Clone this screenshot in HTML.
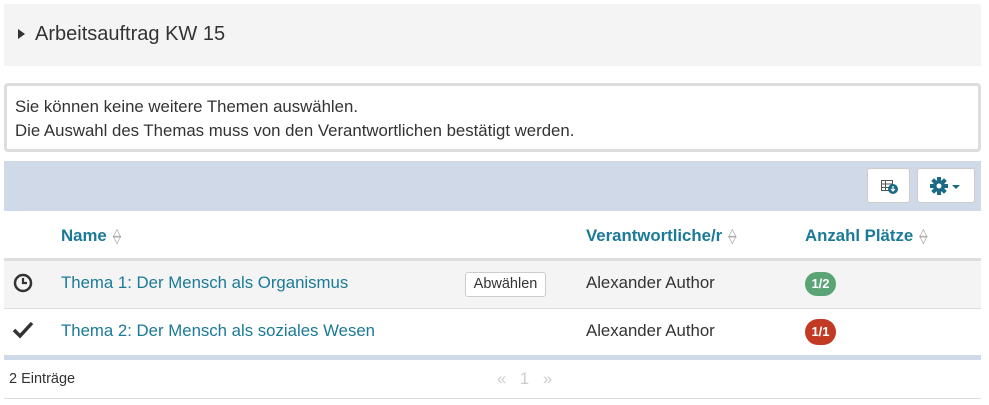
<!DOCTYPE html><html><head><meta charset="utf-8"><style>
body{margin:0;background:#fff;font-family:"Liberation Sans",sans-serif;color:#333;width:989px;height:405px;overflow:hidden;position:relative}
.a{position:absolute}
.link{color:#1a7a98}
.th{color:#1a7a98;font-weight:bold;font-size:16.8px}
.sort{color:#999;font-size:11px;display:inline-block;line-height:7px;vertical-align:middle;margin-left:6px;font-weight:normal}
</style></head><body>
<div class="a" style="left:4px;top:4px;width:977px;height:62px;background:#f4f4f4"></div>
<div class="a" style="left:18px;top:29px;width:0;height:0;border-left:7px solid #333;border-top:5px solid transparent;border-bottom:5px solid transparent"></div>
<div class="a" style="left:35px;top:23px;font-size:20px;color:#333">Arbeitsauftrag KW 15</div>
<div class="a" style="left:4px;top:83px;width:963px;height:63px;border:3px solid #ddd;border-radius:4px;font-size:16.8px;line-height:24px;padding:0 0 0 8px;box-sizing:content-box"><div style="margin-top:9px">Sie können keine weitere Themen auswählen.<br>Die Auswahl des Themas muss von den Verantwortlichen bestätigt werden.</div></div>
<div class="a" style="left:4px;top:161px;width:977px;height:50px;background:#cfd9e8"></div>
<div class="a" style="left:867px;top:168px;width:43px;height:35px;background:#fff;border:1px solid #ccc;border-radius:3px;box-sizing:border-box"><svg width="43" height="35"><g fill="none" stroke="#555" stroke-width="1"><rect x="13.5" y="11.5" width="11" height="10"/><line x1="13.5" y1="15" x2="24.5" y2="15"/><line x1="13.5" y1="18.5" x2="24.5" y2="18.5"/><line x1="17.5" y1="11.5" x2="17.5" y2="21.5"/></g><circle cx="25" cy="20" r="5" fill="#1a6a86"/><path d="M25 17v5M23 20l2 2 2-2" stroke="#fff" stroke-width="1.2" fill="none"/></svg></div>
<div class="a" style="left:917px;top:168px;width:58px;height:35px;background:#fff;border:1px solid #ccc;border-radius:3px;box-sizing:border-box"><svg width="58" height="35"><g transform="translate(21,17)" fill="#1a6a86"><circle r="6"/><g><rect x="-2" y="-9" width="4" height="18"/><rect x="-9" y="-2" width="18" height="4"/><rect x="-2" y="-9" width="4" height="18" transform="rotate(45)"/><rect x="-2" y="-9" width="4" height="18" transform="rotate(-45)"/></g><circle r="2.5" fill="#fff"/></g><path d="M34 16h8l-4 4z" fill="#1a6a86"/></svg></div>
<div class="a th" style="left:61px;top:226px">Name<span class="sort">△<br>▽</span></div>
<div class="a th" style="left:586px;top:226px">Verantwortliche/r<span class="sort">△<br>▽</span></div>
<div class="a th" style="left:805px;top:226px">Anzahl Plätze<span class="sort">△<br>▽</span></div>
<div class="a" style="left:4px;top:258px;width:977px;height:3px;background:#ddd"></div>
<div class="a" style="left:4px;top:261px;width:977px;height:47px;background:#f4f4f4"></div>
<div class="a" style="left:4px;top:308px;width:977px;height:1px;background:#ddd"></div>
<svg class="a" style="left:12px;top:272px" width="22" height="22"><circle cx="11" cy="11" r="8" fill="none" stroke="#333" stroke-width="2.5"/><path d="M11 6v5h4" stroke="#333" stroke-width="2.2" fill="none"/></svg>
<div class="a link" style="left:61px;top:273px;font-size:16.8px">Thema 1: Der Mensch als Organismus</div>
<div class="a" style="left:465px;top:272px;width:81px;height:25px;border:1px solid #ccc;border-radius:3px;background:#fff;box-sizing:border-box;font-size:14.5px;text-align:center;line-height:23px;color:#333">Abwählen</div>
<div class="a" style="left:586px;top:273px;font-size:16.8px">Alexander Author</div>
<div class="a" style="left:805px;top:272px;width:31px;height:24px;border-radius:12px;background:#5aa476;color:#fff;font-weight:bold;font-size:13px;text-align:center;line-height:24px">1/2</div>
<svg class="a" style="left:12px;top:320px" width="22" height="20"><path d="M2 10l6 6L20 3" stroke="#333" stroke-width="3.5" fill="none"/></svg>
<div class="a link" style="left:61px;top:321px;font-size:16.8px">Thema 2: Der Mensch als soziales Wesen</div>
<div class="a" style="left:586px;top:321px;font-size:16.8px">Alexander Author</div>
<div class="a" style="left:805px;top:319px;width:31px;height:26px;border-radius:13px;background:#c33a24;color:#fff;font-weight:bold;font-size:13px;text-align:center;line-height:26px">1/1</div>
<div class="a" style="left:4px;top:355px;width:977px;height:5px;background:#cfd9e8"></div>
<div class="a" style="left:9px;top:371px;font-size:14.5px">2 Einträge</div>
<div class="a" style="left:497px;top:370px;font-size:16.5px;color:#ccc">«&nbsp;&nbsp;&nbsp;1&nbsp;&nbsp;&nbsp;»</div>
<div class="a" style="left:4px;top:398px;width:977px;height:1px;background:#ddd"></div>
</body></html>
